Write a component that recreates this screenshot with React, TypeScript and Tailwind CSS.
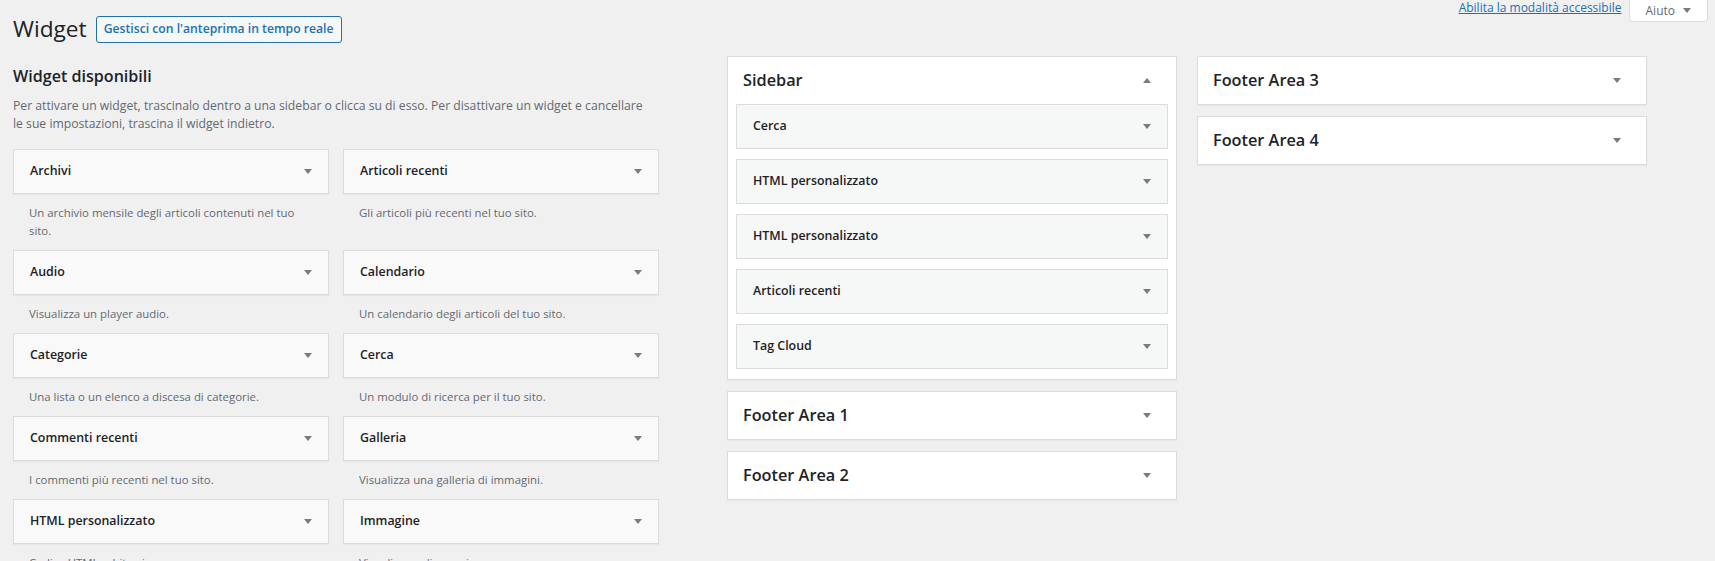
import React from "react";

const font = { fontFamily: '"Open Sans", "Noto Sans", sans-serif' };

type WidgetItem = { title: string; description: string };

const availableWidgets: WidgetItem[] = [
  { title: "Archivi", description: "Un archivio mensile degli articoli contenuti nel tuo sito." },
  { title: "Articoli recenti", description: "Gli articoli più recenti nel tuo sito." },
  { title: "Audio", description: "Visualizza un player audio." },
  { title: "Calendario", description: "Un calendario degli articoli del tuo sito." },
  { title: "Categorie", description: "Una lista o un elenco a discesa di categorie." },
  { title: "Cerca", description: "Un modulo di ricerca per il tuo sito." },
  { title: "Commenti recenti", description: "I commenti più recenti nel tuo sito." },
  { title: "Galleria", description: "Visualizza una galleria di immagini." },
  { title: "HTML personalizzato", description: "Codice HTML arbitrario." },
  { title: "Immagine", description: "Visualizza un'immagine." },
  { title: "Menu di navigazione", description: "Aggiungi un menu di navigazione alla tua barra laterale." },
  { title: "Meta", description: "Login, feed RSS e link a WordPress.org." },
];

const sidebarWidgets = ["Cerca", "HTML personalizzato", "HTML personalizzato", "Articoli recenti", "Tag Cloud"];

const Arrow = ({ up = false, className = "" }: { up?: boolean; className?: string }) => (
  <svg width="8" height="5" viewBox="0 0 8 5" className={className}>
    {up ? <path d="M0 5 L4 0 L8 5 Z" fill="#787c82" /> : <path d="M0 0 L8 0 L4 5 Z" fill="#787c82" />}
  </svg>
);

const AvailableWidget = ({ item }: { item: WidgetItem }) => (
  <div>
    <div className="flex h-[45px] items-center justify-between border border-[#dcdcde] bg-[#f9f9f9] pl-[16px] pr-[16px] shadow-[0_1px_1px_rgba(0,0,0,0.04)]">
      <span className="text-[12.4px] font-semibold text-[#1d2327]">{item.title}</span>
      <Arrow />
    </div>
    <div className="pb-[10px] pl-[16px] pr-[20px] pt-[10px] text-[11.4px] leading-[18px] text-[#646970]">{item.description}</div>
  </div>
);

const SidebarArea = ({ name, open = false }: { name: string; open?: boolean }) => (
  <div className="border border-[#dcdcde] bg-white shadow-[0_1px_1px_rgba(0,0,0,0.04)]">
    <div className="flex h-[47px] items-center justify-between pl-[15px] pr-[25px]">
      <h2 className="text-[16.3px] font-semibold text-[#1d2327]">{name}</h2>
      <Arrow up={open} />
    </div>
    {open && (
      <div className="flex flex-col gap-[10px] px-[8px] pb-[10px]">
        {sidebarWidgets.map((w, i) => (
          <div
            key={i}
            className="flex h-[45px] items-center justify-between border border-[#dcdcde] bg-[#f6f7f7] pl-[16px] pr-[16px]"
          >
            <span className="text-[12.4px] font-semibold text-[#1d2327]">{w}</span>
            <Arrow />
          </div>
        ))}
      </div>
    )}
  </div>
);

export default function App() {
  return (
    <div className="h-[561px] w-[1715px] overflow-hidden bg-[#f0f0f1] text-[#3c434a]" style={font}>
      <div className="flex items-start justify-between">
        <div className="mt-[14px] flex items-center pl-[13px]">
          <h1 className="text-[22.7px] leading-[30px] font-normal text-[#1d2327]">Widget</h1>
          <button className="ml-[9px] h-[27px] rounded-[3px] border border-[#2271b1] bg-[#f6f7f7] px-[7px] text-[12.2px] font-semibold text-[#2271b1]">
            Gestisci con l'anteprima in tempo reale
          </button>
        </div>
        <div className="flex items-start pr-[7px]">
          <a className="text-[12px] leading-[16px] text-[#2271b1] underline" href="#">
            Abilita la modalità accessibile
          </a>
          <div className="ml-[7px] flex h-[22px] items-center gap-[8px] rounded-b-[4px] border border-t-0 border-[#dcdcde] bg-white px-[16px] text-[12px] text-[#646970]">
            Aiuto
            <Arrow />
          </div>
        </div>
      </div>

      <div className="mt-[12px] flex items-start">
        <div className="ml-[13px] w-[646px]">
          <h2 className="mt-[8px] text-[16.1px] leading-[24px] font-semibold text-[#1d2327]">Widget disponibili</h2>
          <p className="mt-[9px] w-[640px] text-[12.2px] leading-[18px] text-[#646970]">
            Per attivare un widget, trascinalo dentro a una sidebar o clicca su di esso. Per disattivare un widget e cancellare le sue impostazioni, trascina il widget indietro.
          </p>
          <div className="mt-[16px] grid grid-cols-[316px_316px] gap-x-[14px]">
            {availableWidgets.map((item, i) => (
              <AvailableWidget key={i} item={item} />
            ))}
          </div>
        </div>

        <div className="ml-[68px] flex w-[450px] flex-col gap-[11px]">
          <SidebarArea name="Sidebar" open />
          <SidebarArea name="Footer Area 1" />
          <SidebarArea name="Footer Area 2" />
        </div>

        <div className="ml-[20px] flex w-[450px] flex-col gap-[11px]">
          <SidebarArea name="Footer Area 3" />
          <SidebarArea name="Footer Area 4" />
        </div>
      </div>
    </div>
  );
}
